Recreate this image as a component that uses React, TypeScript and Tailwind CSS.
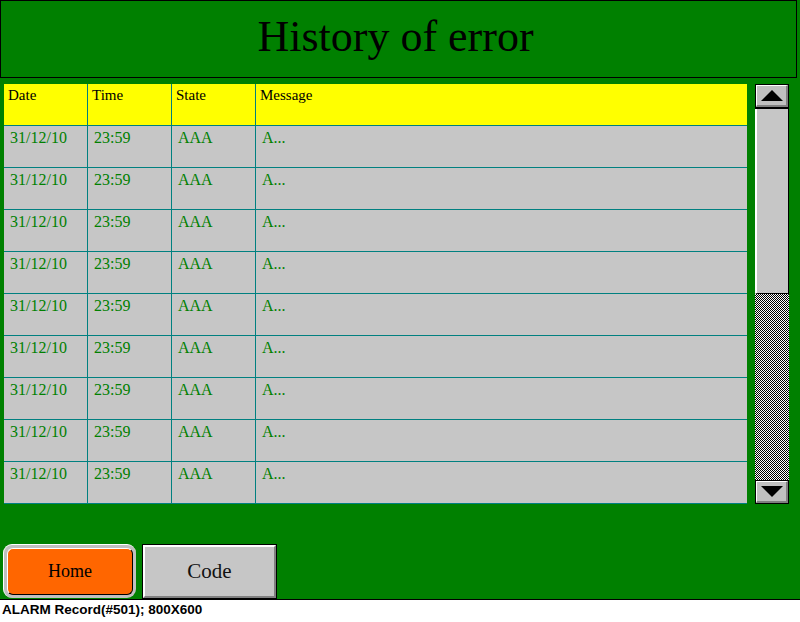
import React from 'react'

const rows = Array.from({ length: 9 }, () => ({ date: '31/12/10', time: '23:59', state: 'AAA', message: 'A...' }))

const serif = "font-['Liberation_Serif',serif]"

const Arrow = ({ down }: { down?: boolean }) => (
  <svg width="22" height="11" viewBox="0 0 22 11">
    {down ? <polygon points="0,0 22,0 11,11" fill="#000" /> : <polygon points="0,11 22,11 11,0" fill="#000" />}
  </svg>
)

const ScrollButton = ({ down }: { down?: boolean }) => (
  <div className="h-[24px] border border-black bg-[#c0c0c0]">
    <div className="h-full flex items-center justify-center border-t border-l border-white border-r-2 border-b-2 border-r-[#808080] border-b-[#808080]">
      <Arrow down={down} />
    </div>
  </div>
)

const App = () => {
  return (
    <div className="w-[800px] h-[622px] bg-[#008000] flex flex-col overflow-hidden">
      <div className={`w-[797px] h-[78px] border border-black flex items-center justify-center ${serif}`}>
        <div className="text-[44px] leading-none text-black mt-[-4px] ml-[-6px]">History of error</div>
      </div>

      <div className="flex mt-[6px] pl-[4px] gap-[8px]">
        <div className={`w-[743px] bg-[#008080] flex flex-col gap-px ${serif}`}>
          <div className="grid grid-cols-[83px_83px_83px_1fr] gap-x-px h-[41px] text-[15px] text-black">
            {['Date', 'Time', 'State', 'Message'].map((h) => (
              <div key={h} className="pl-[4px] bg-[#ffff00]">{h}</div>
            ))}
          </div>
          {rows.map((r, idx) => (
            <div key={idx} className="grid grid-cols-[83px_83px_83px_1fr] gap-x-px h-[41px] text-[16px] text-[#008000]">
              <div className="pl-[6px] bg-[#c6c6c6]">{r.date}</div>
              <div className="pl-[6px] bg-[#c6c6c6]">{r.time}</div>
              <div className="pl-[6px] bg-[#c6c6c6]">{r.state}</div>
              <div className="pl-[6px] bg-[#c6c6c6]">{r.message}</div>
            </div>
          ))}
          <div className="h-0" />
        </div>

        <div className="w-[34px] h-[420px] flex flex-col">
          <ScrollButton />
          <div className="h-[1px] bg-black" />
          <div className="h-[185px] bg-[#c6c6c6] border-l-2 border-l-white border-r border-r-black border-b border-b-black" />
          <div className="flex-1 bg-[repeating-conic-gradient(#000_0_25%,#fff_0_50%)] bg-[length:2px_2px]" />
          <ScrollButton down />
        </div>
      </div>

      <div className="flex gap-[6px] mt-[40px] pl-[3px]">
        <div className="w-[133px] h-[54px] rounded-[9px] bg-[#c0c0c0] p-[3px] border-t border-l border-white">
          <div className={`h-full rounded-[6px] bg-[#ff6600] border border-black border-t-white border-l-white flex items-center justify-center text-[18px] text-black ${serif}`}>
            Home
          </div>
        </div>
        <div className="w-[135px] h-[55px] border border-black bg-[#c6c6c6]">
          <div className={`h-full border-t-2 border-l-2 border-white border-r-2 border-b-2 border-r-[#808080] border-b-[#808080] flex items-center justify-center text-[21px] text-[#111] ${serif}`}>
            Code
          </div>
        </div>
      </div>

      <div className="mt-auto h-[23px] bg-white border-t border-black pl-[2px] font-['Liberation_Sans',sans-serif] font-bold text-[13.5px] leading-[20px] text-black">
        ALARM Record(#501); 800X600
      </div>
    </div>
  )
}

export default App
